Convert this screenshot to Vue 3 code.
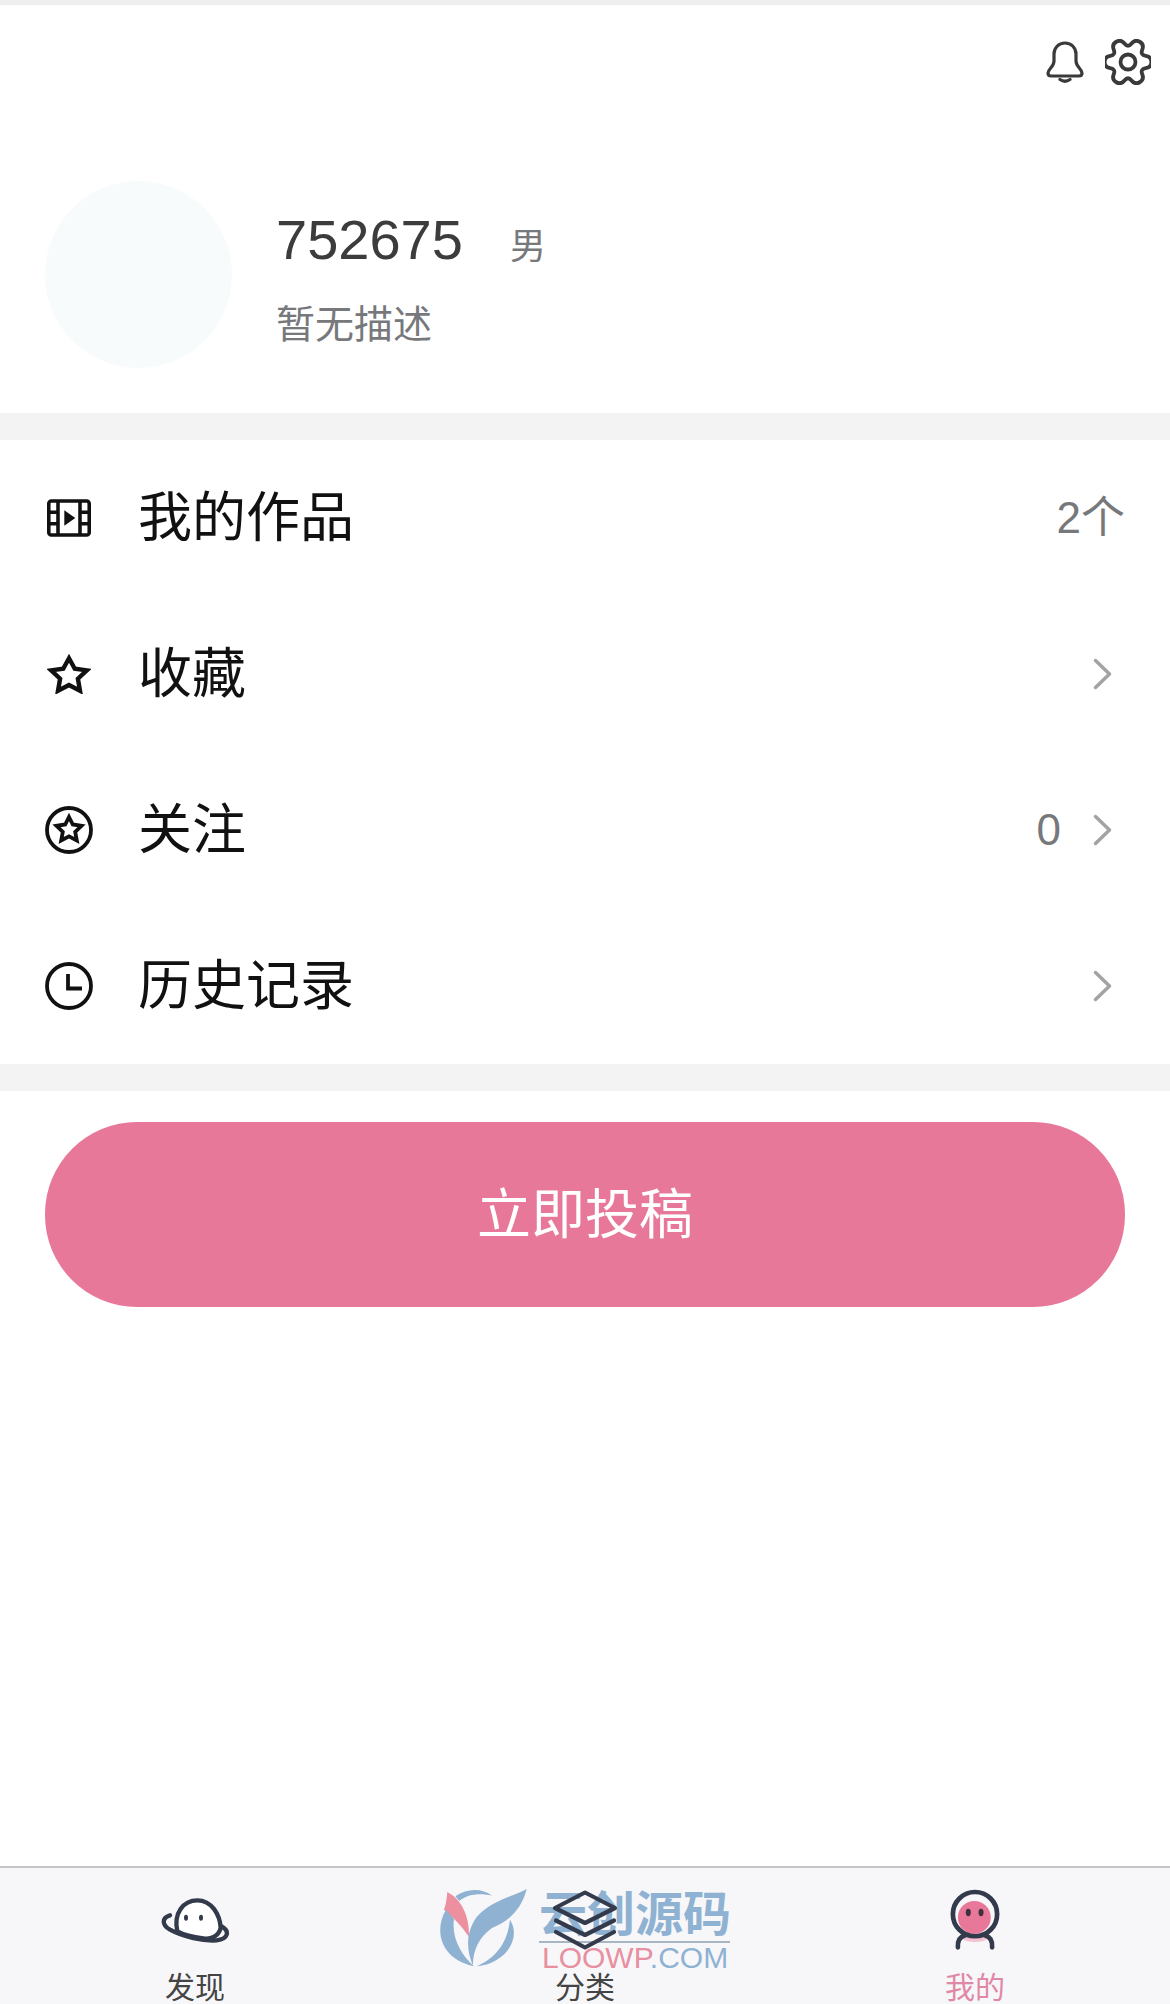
<script setup>
const menu = [
  { icon: 'film', label: '我的作品', value: '2个', arrow: false },
  { icon: 'star', label: '收藏', value: '', arrow: true },
  { icon: 'follow', label: '关注', value: '0', arrow: true },
  { icon: 'clock', label: '历史记录', value: '', arrow: true },
]

function gearPath() {
  const pts = []
  for (let i = 0; i < 6; i++) {
    const a = i * 60
    for (const [deg, r] of [[a - 13, 24], [a + 13, 24], [a + 30, 14]]) {
      const t = (deg * Math.PI) / 180
      pts.push([23 + r * Math.cos(t), 23 + r * Math.sin(t)])
    }
  }
  const mid = (p, q) => `${((p[0] + q[0]) / 2).toFixed(2)} ${((p[1] + q[1]) / 2).toFixed(2)}`
  let d = `M${mid(pts[pts.length - 1], pts[0])}`
  pts.forEach((p, i) => {
    d += ` Q${p[0].toFixed(2)} ${p[1].toFixed(2)} ${mid(p, pts[(i + 1) % pts.length])}`
  })
  return d + 'Z'
}
</script>

<template>
  <div class="page">
    <div class="strip"></div>

    <header class="profile">
      <div class="topbar">
        <svg class="bell" viewBox="0 0 38 44" fill="none" stroke="#3a3a3a" stroke-width="3.200" stroke-linejoin="round" stroke-linecap="round">
          <path d="M19 3C12.500 3 8 8 8 14V21C8 27 2 29 2 33C2 35 3.500 36 5 36H33C34.500 36 36 35 36 33C36 29 30 27 30 21V14C30 8 25.500 3 19 3Z" />
          <path d="M14 39.500Q19 43 24 39.500" />
        </svg>
        <svg class="gear" viewBox="0 0 46 46" fill="none" stroke="#3a3a3a" stroke-width="3.800" stroke-linejoin="round">
          <path :d="gearPath()" />
          <circle cx="23" cy="23" r="7.500" />
        </svg>
      </div>
      <div class="user">
        <div class="avatar"></div>
        <div class="info">
          <div class="nameline">
            <span class="name">752675</span>
            <span class="gender">男</span>
          </div>
          <div class="desc">暂无描述</div>
        </div>
      </div>
    </header>

    <div class="gap"></div>

    <ul class="menu">
      <li v-for="item in menu" :key="item.label" class="row">
        <span class="row-icon">
          <svg v-if="item.icon === 'film'" width="44" height="38" viewBox="0 0 42 36" fill="none" stroke="#111" stroke-width="3.400">
            <rect x="1.700" y="1.700" width="38.600" height="32.600" rx="2.500" />
            <path d="M10.500 2V34M31.500 2V34M2 12.500H10M2 23.500H10M32 12.500H40M32 23.500H40" />
            <path d="M16.500 10.500L27 18L16.500 25.500Z" fill="#111" stroke="none" />
          </svg>
          <svg v-else-if="item.icon === 'star'" width="44" height="40" viewBox="0 0 42 38" fill="none" stroke="#111" stroke-width="4.200">
            <polygon points="21,4 26.500,14 38,15.500 29.500,23.500 31.500,35 21,29.500 10.500,35 12.500,23.500 4,15.500 15.500,14" />
          </svg>
          <svg v-else-if="item.icon === 'follow'" width="48" height="48" viewBox="0 0 48 48" fill="none" stroke="#111" stroke-width="3.800">
            <circle cx="24" cy="24" r="22" />
            <polygon points="24,11 27.800,18.500 36.500,19.800 30.200,25.800 31.800,34.500 24,30.300 16.200,34.500 17.800,25.800 11.500,19.800 20.200,18.500" />
          </svg>
          <svg v-else width="48" height="48" viewBox="0 0 48 48" fill="none" stroke="#111" stroke-width="3.800">
            <circle cx="24" cy="24" r="22" />
            <path d="M23 12V26.500H37" />
          </svg>
        </span>
        <span class="row-label">{{ item.label }}</span>
        <span v-if="item.value" class="row-value">{{ item.value }}</span>
        <svg v-if="item.arrow" class="chevron" viewBox="0 0 19 32" fill="none" stroke="#a3a3a3" stroke-width="3.500" stroke-linecap="round" stroke-linejoin="round">
          <path d="M2.500 2.500L16.500 16L2.500 29.500" />
        </svg>
      </li>
    </ul>

    <div class="gap"></div>

    <div class="action">
      <button class="submit" type="button">立即投稿</button>
    </div>

    <nav class="tabbar">
      <div class="watermark">
        <svg class="wm-logo" viewBox="60 85 270 240">
          <path d="M88 97C128 118 155 165 153 232C130 195 102 172 78 150C85 132 86 115 88 97Z" fill="#ec8f9e" />
          <path d="M84 150C50 205 60 295 168 320C130 285 100 235 108 178Z" fill="#8fb2d2" />
          <path d="M112 110C148 84 195 86 222 108C188 100 150 102 124 124Z" fill="#8fb2d2" />
          <path d="M326 88C290 108 215 125 176 172C146 215 142 265 165 318C164 272 184 232 222 205C275 185 312 145 326 88Z" fill="#8fb2d2" />
          <path d="M276 180C312 235 262 312 176 320C236 292 268 250 276 180Z" fill="#8fb2d2" />
        </svg>
        <div class="wm-text">
          <div class="wm-cn">云创源码</div>
          <div class="wm-en"><span class="wm-pink">LOOWP</span>.COM</div>
        </div>
      </div>

      <div class="tab">
        <span class="tab-icon">
          <svg width="70" height="45" viewBox="120 145 210 135" fill="none" stroke="#333a4b" stroke-width="13" stroke-linecap="round">
            <path d="M172 245C160 190 190 152 232 152C275 152 300 195 302 235C295 262 270 270 250 266C215 262 190 255 172 245Z" fill="#fff" />
            <path d="M150 197C125 205 125 225 150 240C190 262 250 275 290 272C325 268 330 245 305 230" />
            <ellipse cx="198" cy="204" rx="6" ry="9" fill="#333a4b" stroke="none" />
            <ellipse cx="243" cy="204" rx="6" ry="9" fill="#333a4b" stroke="none" />
          </svg>
        </span>
        <span class="tab-label">发现</span>
      </div>
      <div class="tab">
        <span class="tab-icon">
          <svg width="66" height="60" viewBox="0 0 66 60" fill="none" stroke="#333a4b" stroke-width="4.200" stroke-linejoin="round" stroke-linecap="round">
            <path d="M33 2.500L63 18L33 33L3 18Z" />
            <path d="M4 30.500L33 45L62 30.500" />
            <path d="M4 42L33 57.500L62 42" />
          </svg>
        </span>
        <span class="tab-label">分类</span>
      </div>
      <div class="tab">
        <span class="tab-icon">
          <svg width="54" height="62" viewBox="145 120 160 185" fill="none">
            <ellipse cx="225" cy="268" rx="36" ry="10" fill="#f3c1d1" />
            <circle cx="223" cy="205" r="49" fill="#e87899" />
            <circle cx="225" cy="195" r="66" stroke="#333a4b" stroke-width="14" />
            <path d="M174 294C172 272 182 262 196 258M276 294C278 272 268 262 254 258" stroke="#333a4b" stroke-width="14" stroke-linecap="round" />
            <ellipse cx="205" cy="190" rx="7.500" ry="11" fill="#40303f" />
            <ellipse cx="243" cy="190" rx="7.500" ry="11" fill="#40303f" />
          </svg>
        </span>
        <span class="tab-label active">我的</span>
      </div>
    </nav>
  </div>
</template>

<style scoped>
.page {
  height: 2004px;
  display: flex;
  flex-direction: column;
  overflow: hidden;
  background: #fff;
  font-family: "Liberation Sans", "Noto Sans CJK SC", sans-serif;
}

.strip {
  height: 5px;
  background: #eeeeee;
}

.profile {
  height: 408px;
  box-sizing: border-box;
}

.topbar {
  display: flex;
  justify-content: flex-end;
  align-items: center;
  gap: 21px;
  padding: 34px 19px 0 0;
}

.bell {
  width: 38px;
  height: 44px;
}

.gear {
  width: 46px;
  height: 46px;
}

.user {
  display: flex;
  align-items: center;
  margin-top: 96px;
  padding-left: 45px;
}

.avatar {
  width: 187px;
  height: 187px;
  border-radius: 50%;
  background: #f8fbfc;
}

.info {
  margin-left: 44px;
  padding-top: 7px;
}

.nameline {
  display: flex;
  align-items: baseline;
  height: 64px;
}

.name {
  font-size: 56px;
  line-height: 64px;
  color: #3c3c3c;
}

.gender {
  margin-left: 47px;
  font-size: 36px;
  color: #77787b;
}

.desc {
  margin-top: 30px;
  font-size: 39px;
  line-height: 46px;
  color: #77787b;
}

.gap {
  height: 27px;
  background: #f3f3f3;
}

.menu {
  list-style: none;
  margin: 0;
  padding: 0;
}

.row {
  display: flex;
  align-items: center;
  height: 156px;
  padding: 0 45px;
}

.row-icon {
  width: 48px;
  display: flex;
  justify-content: center;
  margin-right: 45px;
}

.row-label {
  flex: 1;
  padding-bottom: 9px;
  font-size: 54px;
  color: #111;
}

.row-value {
  font-size: 44px;
  line-height: 50px;
  color: #77787b;
}

.chevron {
  width: 19px;
  height: 32px;
  margin: 0 13px 0 32px;
}

.action {
  padding: 31px 45px 0;
}

.submit {
  display: block;
  width: 100%;
  height: 185px;
  padding: 0 0 9px;
  border: none;
  border-radius: 92px;
  background: #e87899;
  color: #fff;
  font-family: inherit;
  font-size: 54px;
}

.tabbar {
  position: relative;
  display: grid;
  grid-template-columns: repeat(3, 1fr);
  height: 138px;
  box-sizing: border-box;
  margin-top: auto;
  border-top: 2px solid #c6c6c6;
  background: #f7f7fa;
  overflow: hidden;
}

.tab {
  position: relative;
  display: flex;
  flex-direction: column;
  align-items: center;
  padding-top: 21px;
}

.tab-icon {
  display: flex;
  align-items: center;
  justify-content: center;
  height: 62px;
}

.tab-label {
  margin-top: 19px;
  font-size: 30px;
  line-height: 36px;
  color: #444;
}

.tab-label.active {
  color: #e088a6;
}

.watermark {
  position: absolute;
  left: 438px;
  top: 20px;
  display: flex;
}

.wm-logo {
  width: 90px;
  height: 80px;
}

.wm-text {
  width: 191px;
  margin-left: 11px;
}

.wm-cn {
  font-size: 48px;
  font-weight: 700;
  line-height: 53px;
  border-bottom: 2px solid #a9b4c4;
  color: #8fb2d2;
  white-space: nowrap;
}

.wm-en {
  padding-left: 3px;
  font-size: 30px;
  line-height: 29px;
  color: #8fb2d2;
  white-space: nowrap;
}

.wm-pink {
  color: #e88fa0;
}
</style>
